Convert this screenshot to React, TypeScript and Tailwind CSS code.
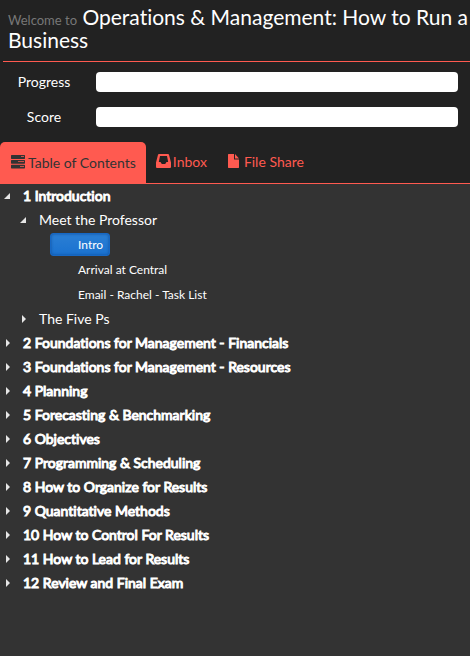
import React from 'react';

const meters = [
  { id: 'progress', label: 'Progress' },
  { id: 'score', label: 'Score' },
];

const lessons = ['Intro', 'Arrival at Central', 'Email - Rachel - Task List'];

const chapters = [
  '2 Foundations for Management - Financials',
  '3 Foundations for Management - Resources',
  '4 Planning',
  '5 Forecasting & Benchmarking',
  '6 Objectives',
  '7 Programming & Scheduling',
  '8 How to Organize for Results',
  '9 Quantitative Methods',
  '10 How to Control For Results',
  '11 How to Lead for Results',
  '12 Review and Final Exam',
];

function TasksIcon() {
  return (
    <svg viewBox="0 0 14 14" className="w-[14px] h-[14px] -translate-y-px" fill="currentColor" aria-hidden="true">
      <path fillRule="evenodd" d="M0.5 0H13.5L14 0.5V3.5L13.5 4H0.5L0 3.5V0.5ZM10 1.2V2H13V1.2Z" />
      <path fillRule="evenodd" d="M0.5 5H13.5L14 5.5V8.2L13.5 8.7H0.5L0 8.2V5.5ZM7 6.2V7H13V6.2Z" />
      <path fillRule="evenodd" d="M0.5 9.7H13.5L14 10.2V13L13.5 13.5H0.5L0 13V10.2ZM9 11V11.8H13V11Z" />
    </svg>
  );
}

function InboxIcon() {
  return (
    <svg viewBox="0 0 15 14" className="w-[15px] h-[14px] -translate-y-px" fill="currentColor" aria-hidden="true">
      <path fillRule="evenodd" d="M3 0H12Q12.8 0 13 0.8L15 8.5V13Q15 14 14 14H1Q0 14 0 13V8.5L2 0.8Q2.2 0 3 0ZM4 2L2.8 8H4.5L5.8 10H9.2L10.5 8H12.2L11 2Z" />
    </svg>
  );
}

function FileIcon() {
  return (
    <svg viewBox="0 0 11 14" className="w-[11px] h-[14px] -translate-y-px" fill="currentColor" aria-hidden="true">
      <path d="M0.5 0H6V5.5H11V13.5L10.5 14H0.5L0 13.5V0.5Z" />
      <path d="M7 0L11 4.5H7Z" />
    </svg>
  );
}

function Arrow({ open = false }: { open?: boolean }) {
  return (
    <svg viewBox="0 0 6 8" className="w-[6px] h-[8px] shrink-0" fill="#e6e6e6" aria-hidden="true">
      {open ? <path d="M6 1V7H0Z" /> : <path d="M2 0L6 4L2 8Z" />}
    </svg>
  );
}

export default function App() {
  return (
    <div className="min-h-screen bg-[#333333] text-white font-['Lato',sans-serif] text-sm [font-variant-ligatures:none]">
      <header className="bg-[#222222]">
        <h1 className="ml-[3px] pl-[5px] pt-[5px] pb-[10px] border-b border-[#ff5a50] text-[21px] leading-[23px]">
          <small className="text-[13px] leading-none text-[#777777]">Welcome to</small> Operations &amp; Management: How to Run a Business
        </h1>

        <div className="flex flex-col gap-[15px] pt-[10px] pr-3">
          {meters.map((meter) => (
            <div key={meter.id} className="flex items-center h-5">
              <label htmlFor={meter.id} className="w-24 pr-2 text-center">
                {meter.label}
              </label>
              <input id={meter.id} type="text" readOnly className="flex-1 min-w-0 h-5 rounded bg-white outline-none" />
            </div>
          ))}
        </div>

        {/* Tabs */}
        <nav className="flex mt-[15px] border-b border-[#ff5a50] text-[#ff5a50]">
          <button type="button" className="flex items-center gap-[3px] h-[41px] pl-[11px] pr-[10px] rounded-t-[5px] bg-[#ff5a50] text-[#333333]">
            <TasksIcon />
            Table of Contents
          </button>
          <button type="button" className="flex items-center gap-[2px] h-[41px] px-[10px] pb-[2px]">
            <InboxIcon />
            Inbox
          </button>
          <button type="button" className="flex items-center gap-[5px] h-[41px] pl-[11px] pb-[2px]">
            <FileIcon />
            File Share
          </button>
        </nav>
      </header>

      {/* Course tree */}
      <ul>
        <li>
          <button type="button" className="flex items-center gap-[13px] h-6 pl-1 [-webkit-text-stroke:1px]">
            <Arrow open />
            1 Introduction
          </button>
          <ul className="pl-5">
            <li>
              <button type="button" className="flex items-center gap-[13px] h-6">
                <Arrow open />
                Meet the Professor
              </button>
              <ul className="flex flex-col items-start gap-[2px] pl-[30px] py-px">
                {lessons.map((lesson, i) => (
                  <li key={lesson}>
                    <button
                      type="button"
                      className={
                        i === 0
                          ? 'block h-[23px] pl-[27px] pr-[6px] rounded-[3px] border border-[#1668c5] bg-linear-to-b from-[#2b7fd4] to-[#1a72d0] shadow-[inset_0_0_3px_#0f4f9e] text-xs'
                          : 'block h-[23px] pl-7 text-xs'
                      }
                    >
                      {lesson}
                    </button>
                  </li>
                ))}
              </ul>
            </li>
            <li>
              <button type="button" className="flex items-center gap-[13px] h-6">
                <Arrow />
                The Five Ps
              </button>
            </li>
          </ul>
        </li>
        {chapters.map((chapter) => (
          <li key={chapter}>
            <button type="button" className="flex items-center gap-[13px] h-6 pl-1 [-webkit-text-stroke:1px]">
              <Arrow />
              {chapter}
            </button>
          </li>
        ))}
      </ul>
    </div>
  );
}
